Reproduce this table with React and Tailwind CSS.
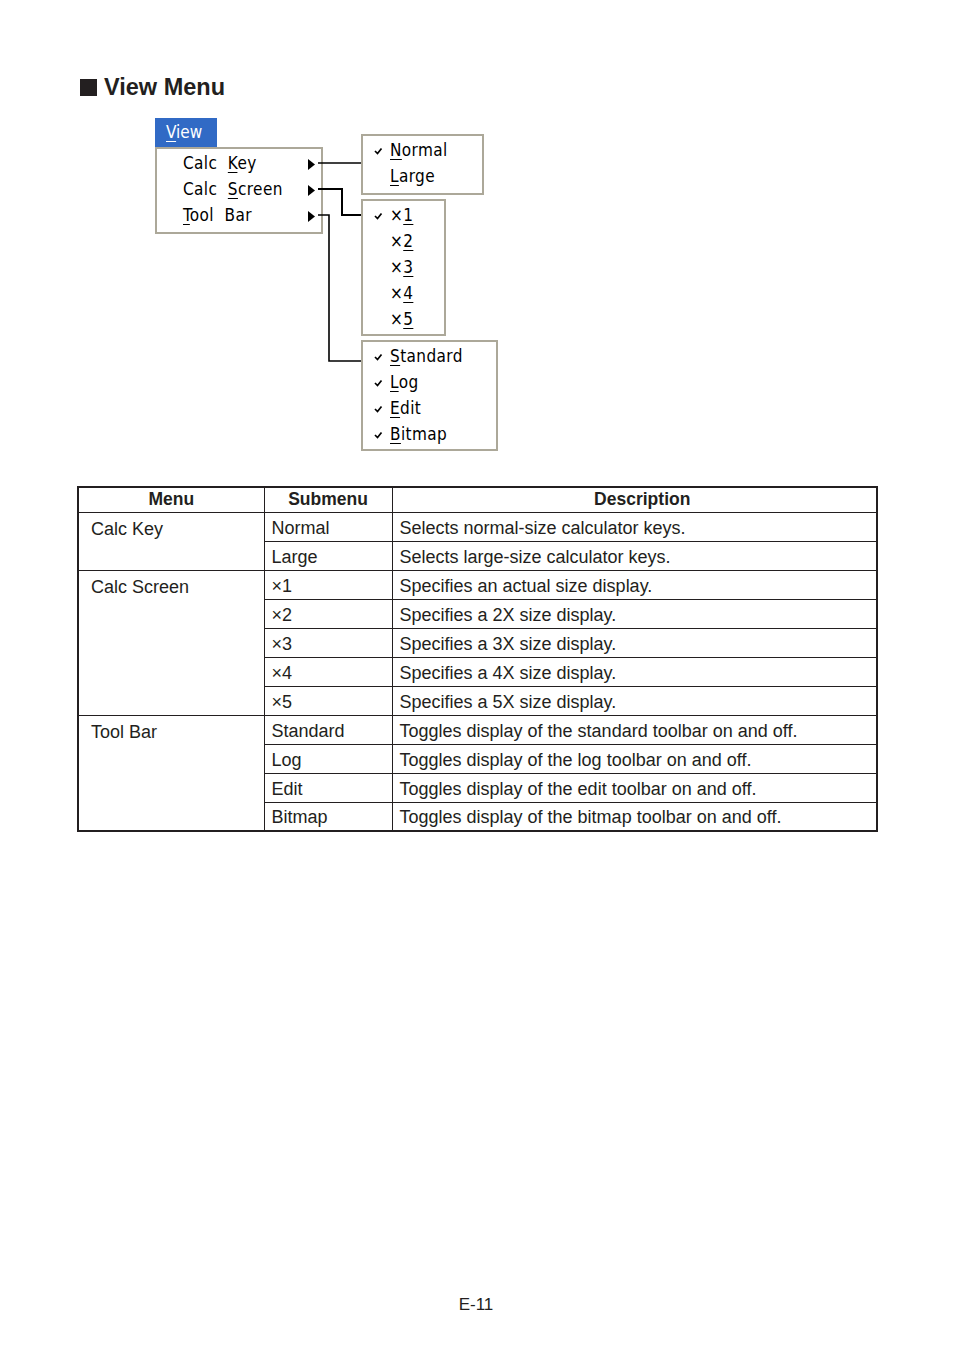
import React from 'react';

const ink = 'text-[#231f20]';

const Check = () => (
    <svg width="9" height="8" viewBox="0 0 9 8" className="shrink-0">
        <path d="M1 4l2.5 2.5L7.5 1.5" fill="none" stroke="#000" strokeWidth="1.7" />
    </svg>
);

const Arrow = () => (
    <svg width="7" height="11" viewBox="0 0 7 11">
        <path d="M0 0l7 5.5L0 11z" fill="#000" />
    </svg>
);

// label with the access letter underlined
const Label = ({ pre = '', hot, post = '' }) => (
    <span className="whitespace-pre">
        {pre}
        <u className="underline underline-offset-[3px] decoration-1">{hot}</u>
        {post}
    </span>
);

const menuFont = { fontFamily: '"DejaVu Sans Condensed", "DejaVu Sans", sans-serif' };

const SubMenu = ({ className, items }) => (
    <div className={`absolute bg-white border-2 border-[#aca899] py-[2px] ${className}`} style={menuFont}>
        {items.map((item, i) => (
            <div key={i} className="h-[26px] flex items-center text-[17px] tracking-[0.4px] text-black">
                <div className="w-[27px] pl-[11px] flex items-center">{item.checked && <Check />}</div>
                <Label {...item.label} />
            </div>
        ))}
    </div>
);

const rows = [
    { menu: 'Calc Key', span: 2, sub: 'Normal', desc: 'Selects normal-size calculator keys.' },
    { sub: 'Large', desc: 'Selects large-size calculator keys.' },
    { menu: 'Calc Screen', span: 5, sub: '×1', desc: 'Specifies an actual size display.' },
    { sub: '×2', desc: 'Specifies a 2X size display.' },
    { sub: '×3', desc: 'Specifies a 3X size display.' },
    { sub: '×4', desc: 'Specifies a 4X size display.' },
    { sub: '×5', desc: 'Specifies a 5X size display.' },
    { menu: 'Tool Bar', span: 4, sub: 'Standard', desc: 'Toggles display of the standard toolbar on and off.' },
    { sub: 'Log', desc: 'Toggles display of the log toolbar on and off.' },
    { sub: 'Edit', desc: 'Toggles display of the edit toolbar on and off.' },
    { sub: 'Bitmap', desc: 'Toggles display of the bitmap toolbar on and off.' },
];

export default function App() {
    return (
        <div className={`w-[954px] min-h-[1352px] bg-white flex flex-col ${ink}`} style={{ fontFamily: '"Liberation Sans", Arial, sans-serif' }}>
            <div className="flex items-center pl-[80px] pt-[75px] h-[99px]">
                <div className="w-[17px] h-[17px] bg-[#231f20] mr-[7px]"></div>
                <h1 className="text-[23.5px] font-bold leading-[24px]">View Menu</h1>
            </div>

            {/* menu diagram */}
            <div className="relative h-[350px] mt-[11px]">
                <div className="absolute left-[155px] top-[8px] w-[62px] h-[29px] bg-[#316ac5] text-white text-[17px] flex items-center pl-[11px]" style={menuFont}>
                    <Label hot="V" post="iew" />
                </div>
                <div className="absolute left-[155px] top-[37px] w-[168px] h-[87px] bg-white border-2 border-[#aca899] py-[2px] text-black" style={menuFont}>
                    {[
                        { pre: 'Calc  ', hot: 'K', post: 'ey' },
                        { pre: 'Calc  ', hot: 'S', post: 'creen' },
                        { hot: 'T', post: 'ool  Bar' },
                    ].map((l, i) => (
                        <div key={i} className="h-[26px] flex items-center justify-between pl-[26px] pr-[6px] text-[17px] tracking-[0.4px]">
                            <Label {...l} />
                            <Arrow />
                        </div>
                    ))}
                </div>

                <SubMenu className="left-[361px] top-[24px] w-[123px] h-[61px]" items={[
                    { checked: true, label: { hot: 'N', post: 'ormal' } },
                    { label: { hot: 'L', post: 'arge' } },
                ]} />
                <SubMenu className="left-[361px] top-[89px] w-[85px] h-[137px]" items={[
                    { checked: true, label: { pre: '×', hot: '1' } },
                    { label: { pre: '×', hot: '2' } },
                    { label: { pre: '×', hot: '3' } },
                    { label: { pre: '×', hot: '4' } },
                    { label: { pre: '×', hot: '5' } },
                ]} />
                <SubMenu className="left-[361px] top-[230px] w-[137px] h-[111px]" items={[
                    { checked: true, label: { hot: 'S', post: 'tandard' } },
                    { checked: true, label: { hot: 'L', post: 'og' } },
                    { checked: true, label: { hot: 'E', post: 'dit' } },
                    { checked: true, label: { hot: 'B', post: 'itmap' } },
                ]} />

                <svg className="absolute left-0 top-0" width="954" height="350">
                    <g fill="none" stroke="#000">
                        <path d="M318 53H361" strokeWidth="1.4" />
                        <path d="M318 79H342V105H361" strokeWidth="2" />
                        <path d="M318 105H329V251H361" strokeWidth="1.6" />
                    </g>
                </svg>
            </div>

            {/* table */}
            <table className="ml-[77px] mt-[26px] w-[801px] border-collapse border-2 border-[#231f20] text-[18px] leading-none table-fixed">
                <colgroup>
                    <col className="w-[186px]" />
                    <col className="w-[128px]" />
                    <col />
                </colgroup>
                <thead>
                    <tr className="h-[25px] text-[17.5px]">
                        <th className="border border-[#231f20] font-bold">Menu</th>
                        <th className="border border-[#231f20] font-bold">Submenu</th>
                        <th className="border border-[#231f20] font-bold pl-[16px]">Description</th>
                    </tr>
                </thead>
                <tbody>
                    {rows.map((r, i) => (
                        <tr key={i} className="h-[29px]">
                            {r.menu && (
                                <td rowSpan={r.span} className="border border-[#231f20] align-top pl-[12px] pt-[7px]">{r.menu}</td>
                            )}
                            <td className="border border-[#231f20] pl-[7px] pt-[2px]">{r.sub}</td>
                            <td className="border border-[#231f20] pl-[7px] pt-[2px]">{r.desc}</td>
                        </tr>
                    ))}
                </tbody>
            </table>

            <div className="flex-1"></div>
            <div className="text-center text-[17px] pb-[35px] pr-[2px]">E-11</div>
        </div>
    );
}
